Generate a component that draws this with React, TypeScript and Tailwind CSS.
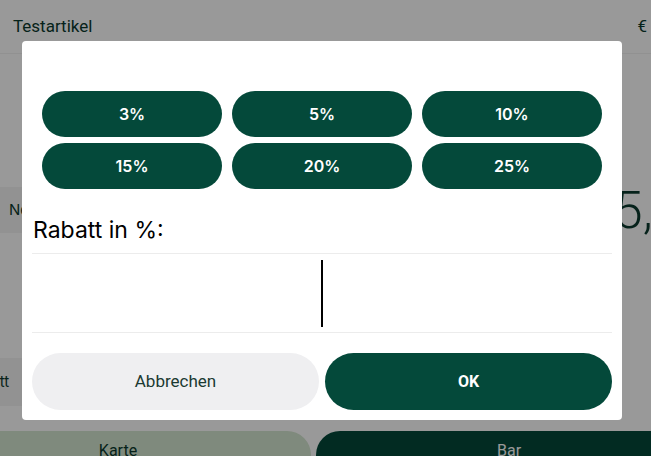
import React from "react";

const presets = ["3%", "5%", "10%", "15%", "20%", "25%"];

export default function App() {
  return (
    <div className="relative h-[456px] w-[651px] overflow-hidden bg-white font-['Inter',sans-serif]">
      {/* page behind the dialog */}
      <div className="flex h-full flex-col">
        <div className="flex h-[54px] items-center justify-between border-b border-[#f2f2f2] pl-[13px] pr-[4px] font-['Liberation_Sans_Narrow','Roboto',sans-serif] text-[17px] text-[#0b3a2e]">
          <span>Testartikel</span>
          <span>€</span>
        </div>
        <div className="flex flex-1">
          <div className="flex w-[200px] shrink-0 flex-col pt-[133px]">
            <div className="flex h-[46px] items-center bg-[#f4f4f4] px-[9px] text-[15px] text-[#0b3a2e]">Neu</div>
            <div className="h-[125px]" />
            <div className="flex h-[48px] items-center bg-[#f4f4f4] text-[15px] text-[#0b3a2e]">
              <span className="ml-[-36px]">Rabatt</span>
            </div>
          </div>
          <div className="flex flex-1 justify-start pl-[385px] pt-[131px]">
            <span className="font-['Roboto',sans-serif] text-[52px] leading-none font-light whitespace-nowrap text-[#0b3a2e]">15,00</span>
          </div>
        </div>
        <div className="ml-[-75px] flex h-[25px] gap-[5px]">
          <div className="flex w-[386px] shrink-0 justify-center rounded-tr-[24px] bg-[#d4e6d0] pt-[8px] font-['Roboto',sans-serif] text-[16px] text-[#0b3a2e]">Karte</div>
          <div className="flex w-[386px] shrink-0 justify-center rounded-tl-[24px] bg-[#04493a] pt-[8px] font-['Roboto',sans-serif] text-[16px] text-white">Bar</div>
        </div>
      </div>

      {/* overlay */}
      <div className="absolute inset-0 bg-black/40" />

      {/* dialog */}
      <div className="absolute left-[22px] top-[41px] flex h-[379px] w-[600px] flex-col rounded-[4px] bg-white">
        <div className="grid grid-cols-3 gap-x-[10px] gap-y-[6px] px-[20px] pt-[50px]">
          {presets.map((p) => (
            <button
              key={p}
              className="flex h-[46px] items-center justify-center rounded-full bg-[#04493a] text-[16px] font-semibold text-white"
            >
              {p}
            </button>
          ))}
        </div>
        <div className="flex h-[64px] items-end px-[11px] pb-[7px] text-[23px] leading-[32px] text-black">
          Rabatt in %:
        </div>
        <div className="mx-[10px] flex h-[80px] items-center justify-center border-y border-[#ececec]">
          <div className="h-[67px] w-[1.5px] bg-black" />
        </div>
        <div className="flex gap-[6px] px-[10px] pt-[20px]">
          <button className="flex h-[57px] flex-1 items-center justify-center rounded-full bg-[#efeff1] font-['Roboto',sans-serif] text-[17px] text-[#1b3a32]">
            Abbrechen
          </button>
          <button className="flex h-[57px] flex-1 items-center justify-center rounded-full bg-[#04493a] font-['Roboto',sans-serif] text-[16px] font-bold text-white">
            OK
          </button>
        </div>
      </div>
    </div>
  );
}
